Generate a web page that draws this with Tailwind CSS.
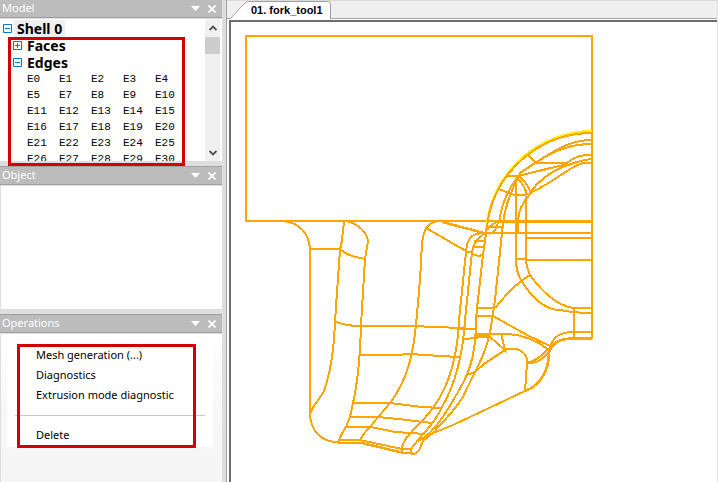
<!DOCTYPE html>
<html lang="en">
<head>
    <meta charset="UTF-8">
    <meta name="viewport" content="width=device-width, initial-scale=1.0">
    <title>fork_tool1</title>
    <script src="https://cdn.jsdelivr.net/npm/@tailwindcss/browser@4"></script>
</head>
<body class="flex h-screen overflow-hidden bg-[#dedede] font-['Noto_Sans',sans-serif] text-[11px] text-black">
    <!-- Side panels -->
    <aside class="flex w-[222px] shrink-0 flex-col gap-[5px]">
        <section class="relative flex h-[161px] flex-col">
            <header class="flex h-[18px] shrink-0 items-center border-b border-[#a0a0a0] bg-[#bcbcbc] pr-0.5 pl-0.5 text-white">
                <h2 class="flex-1 text-[11px]">Model</h2>
                <button aria-label="Model menu" class="px-1"><svg class="h-[5px] w-[9px]" viewBox="0 0 9 5"><path d="M0 0H9L4.500 5Z" fill="#fff"/></svg></button>
                <button aria-label="Close Model" class="px-1"><svg class="size-2" viewBox="0 0 8 8"><path d="M0.500 0.500L7.500 7.500M7.500 0.500L0.500 7.500" stroke="#fff" stroke-width="1.700"/></svg></button>
            </header>
            <div class="mt-px flex min-h-0 flex-1 bg-white">
                <div class="flex-1 overflow-hidden pt-px pl-[3px]">
                    <button class="flex h-[17px] items-center gap-[2px] text-[14px] font-bold">
                        <svg class="size-[9px]" viewBox="0 0 9 9" fill="none" stroke="#0078d7"><path d="M.5 .5H8.500V8.500H.5ZM2 4.500H7"/></svg>
                        <span class="bg-[#efefef] px-[3px] leading-[17px]">Shell 0</span>
                    </button>
                    <button class="ml-[10px] flex h-[17px] items-center gap-[5px] text-[14px] font-bold">
                        <svg class="size-[9px]" viewBox="0 0 9 9" fill="none" stroke="#0078d7"><path d="M.5 .5H8.500V8.500H.5ZM2 4.500H7M4.500 2V7"/></svg>
                        Faces
                    </button>
                    <button class="ml-[10px] flex h-[17px] items-center gap-[5px] text-[14px] font-bold">
                        <svg class="size-[9px]" viewBox="0 0 9 9" fill="none" stroke="#0078d7"><path d="M.5 .5H8.500V8.500H.5ZM2 4.500H7"/></svg>
                        Edges
                    </button>
                    <div id="edges" class="ml-6 grid w-40 grid-cols-5 font-['Liberation_Mono',monospace] text-[11px] leading-4"></div>
                </div>
                <div class="mr-[2px] flex w-[15px] flex-col bg-[#f0f0f0]">
                    <button aria-label="Scroll up" class="flex h-[18px] items-center justify-center"><svg class="h-[6px] w-2" viewBox="0 0 8 6" fill="none" stroke="#505050" stroke-width="1.800"><path d="M.5 5L4 1.500L7.500 5"/></svg></button>
                    <div class="h-[17px] bg-[#cdcdcd]"></div>
                    <div class="flex-1"></div>
                    <button aria-label="Scroll down" class="flex h-[17px] items-center justify-center"><svg class="h-[6px] w-2" viewBox="0 0 8 6" fill="none" stroke="#505050" stroke-width="1.800"><path d="M.5 1L4 4.500L7.500 1"/></svg></button>
                </div>
            </div>
            <div class="pointer-events-none absolute top-[37px] left-2 h-[129px] w-[177px] border-3 border-[#d40000]"></div>
        </section>

        <section class="flex h-[143px] flex-col">
            <header class="flex h-[19px] shrink-0 items-center border-y border-[#a0a0a0] bg-[#bcbcbc] pr-0.5 pl-0.5 text-white">
                <h2 class="flex-1 text-[11px]">Object</h2>
                <button aria-label="Object menu" class="px-1"><svg class="h-[5px] w-[9px]" viewBox="0 0 9 5"><path d="M0 0H9L4.500 5Z" fill="#fff"/></svg></button>
                <button aria-label="Close Object" class="px-1"><svg class="size-2" viewBox="0 0 8 8"><path d="M0.500 0.500L7.500 7.500M7.500 0.500L0.500 7.500" stroke="#fff" stroke-width="1.700"/></svg></button>
            </header>
            <div class="mt-px ml-px flex-1 bg-white"></div>
        </section>

        <section class="relative flex flex-1 flex-col">
            <header class="flex h-[19px] shrink-0 items-center border-y border-[#a0a0a0] bg-[#bcbcbc] pr-0.5 pl-0.5 text-white">
                <h2 class="flex-1 text-[11px]">Operations</h2>
                <button aria-label="Operations menu" class="px-1"><svg class="h-[5px] w-[9px]" viewBox="0 0 9 5"><path d="M0 0H9L4.500 5Z" fill="#fff"/></svg></button>
                <button aria-label="Close Operations" class="px-1"><svg class="size-2" viewBox="0 0 8 8"><path d="M0.500 0.500L7.500 7.500M7.500 0.500L0.500 7.500" stroke="#fff" stroke-width="1.700"/></svg></button>
            </header>
            <div class="mt-px ml-px flex-1 bg-linear-to-b from-white via-[#f7f7f7] to-[#f5f5f5] px-[6px] pt-[11px]">
                <div class="mr-[3px] flex h-[102px] flex-col items-start bg-white px-2 leading-5">
                    <button class="pl-[21px]">Mesh generation (...)</button>
                    <button class="pl-[21px]">Diagnostics</button>
                    <button class="pl-[21px]">Extrusion mode diagnostic</button>
                    <hr class="mt-[10px] mb-[9px] w-full border-[#c8c8c8]">
                    <button class="pl-[21px]">Delete</button>
                </div>
            </div>
            <div class="pointer-events-none absolute top-[30px] left-[17px] h-[104px] w-[179px] border-3 border-[#d40000]"></div>
        </section>
    </aside>

    <!-- Document area -->
    <main class="ml-1 flex min-w-0 flex-1 flex-col border-r border-l border-r-[#e2e2e2] border-l-[#a0a0a0] bg-white">
        <nav class="flex h-[19px] shrink-0 items-end border-t border-b border-t-[#dadada] border-b-[#a8a8a8] bg-[#efefef] pl-[3px]">
            <button class="relative -mb-px flex h-[18px] w-[101px] items-center pl-[21px] font-['Liberation_Sans',sans-serif] text-[11px] font-bold whitespace-nowrap">
                <svg class="absolute inset-0 h-[18px] w-[101px]" viewBox="0 0 101 18"><path d="M0 18L14 3Q16 .5 19 .5H98Q100.500 .5 100.500 3V18" fill="#fff" stroke="#a0a0a0"/></svg>
                <span class="relative">01. fork_tool1</span>
            </button>
        </nav>
        <div class="mt-px ml-[2px] min-h-0 flex-1 border-t-2 border-l-2 border-[#6e6e6e] bg-white">
            <svg class="h-full w-full" viewBox="231 22 486 460" preserveAspectRatio="xMinYMin meet" fill="none" stroke="#ffa500" stroke-width="2" shape-rendering="crispEdges" role="img" aria-label="Wireframe of fork_tool1">
                <!-- frame -->
                <path d="M246 36H592V339M246 35V221H592"/>
                <path stroke-width="3" d="M498 221.500H592"/>
                <!-- left body -->
                <path d="M310 248V416M310 249H340"/>
                <path d="M284 221C300 223 309 234 310 249M310 415C311 431 321 442 338 442"/>
                <path d="M344 221L342 240L340 250L335 321C334 350 331 371 324 391C318 402 311 407 310 415"/>
                <path d="M347 221C358 224 367 232 368 241L365 259L361 325C360 360 356 390 353 403L350 417L346 427Q340 436 338 443"/>
                <path d="M340 249C346 255 355 257 365 259M334 321C342 325 350 326 361 326H418L430 327H440L475 329"/>
                <path d="M442 221H437Q430 223 426 228Q423 235 422 243L420 280L416 325C414 345 409 369 402 383C394 400 386 408 378 417L370 427Q361 436 360 441"/>
                <path d="M359 355H395L411 354L425 355L440 356L460 357M353 403H390L422 407L441 408M350 417H378Q400 419 415 421L432 423M346 427H371L395 432L425 434"/>
                <path d="M340 440H360L402 449H411V454M402 449V454"/>
                <path stroke-width="2.500" d="M338 443H362L404 453H413"/>
                <path d="M411 454C421 455 420 444 424 440L437 430"/>
                <!-- lower sweep -->
                <path d="M472 252L465 320C463 352 456 383 442 407C434 425 421 435 411 449"/>
                <path d="M466 252L459 320C458 352 450 384 435 405C422 425 402 436 402 449"/>
                <path d="M483 255L477 308L476 320C476 360 467 378 455 397C447 411 434 434 418 441"/>
                <path d="M503 223L495 300L492 320C488 355 471 377 463 397Q450 416 435 430"/>
                <path d="M428 435L453 425L525 391M467 375L475 372L484 364L505 350"/>
                <path d="M505 350C515 346 528 351 527 363L525 391M501 333L505 350L490 337C480 336 474 339 463 339"/>
                <path d="M475 334H501C520 333 536 340 549 350M493 316L527 335L550 346M475 336H490"/>
                <path d="M527 363C537 364 545 357 549 352M527 363C535 361 543 355 548 349"/>
                <path stroke-width="2.500" d="M525 391C541 385 549 370 549 352C553 342 560 338.500 574 338.500H592"/>
                <path d="M549 350C553 336 560 332 574 332H592M574 308V339M459 329H475M477 308H495M477 316H493"/>
                <path d="M495 308C505 296 515 284 530 275"/>
                <path d="M516 178V260C516 270 519 277 522 282C533 299 546 310 560 310Q575 313 592 313"/>
                <path d="M526 196V260C526 266 528 270 530 275C542 292 558 306 573 308H592"/>
                <path d="M526 260H592M526 238H592M484 233H592M516 259H526"/>
                <path stroke-width="2.500" d="M442 222L484 233"/>
                <path d="M426 228L466 251M466 252C467 238 472 233 484 233M472 253C472 246 475 240 485 233M474 241H484M472 247H483M466 252H472C474 257 482 256 483 254"/>
                <!-- arches -->
                <path stroke="#fff000" d="M486 230A107 107 0 0 1 592 131"/>
                <path d="M483 255L487 226A106 106 0 0 1 592 133"/>
                <path d="M592 140C568 140 553 152 535 163L520 173L517 178C508 190 501 205 499 223M592 144C569 144 554 151 535 163"/>
                <path d="M520 175C511 190 505 205 503 224"/>
                <path d="M528 155L536 163H567C575 156 582 155 592 155"/>
                <path d="M592 159C580 160 572 164 565 166C548 173 536 184 530 193M592 163H583C570 166 558 180 530 193"/>
                <path d="M508 176H518L567 164M516 177C522 182 525 187 527 195M519 176C525 181 529 188 531 193C520 205 518 215 518 221V233"/>
                <path d="M499 189L514 195H526M488 227H503M489 234C493 233 497 230 498 222M487 230C491 224 497 221 503 222"/>
            </svg>
        </div>
    </main>

    <script>
        // E6 is not part of the shell
        const edges = [];
        for (let i = 0; i <= 30; i++) {
            if (i !== 6) edges.push(`<button class="text-left">E${i}</button>`);
        }
        document.getElementById('edges').innerHTML = edges.join('');
    </script>
</body>
</html>
